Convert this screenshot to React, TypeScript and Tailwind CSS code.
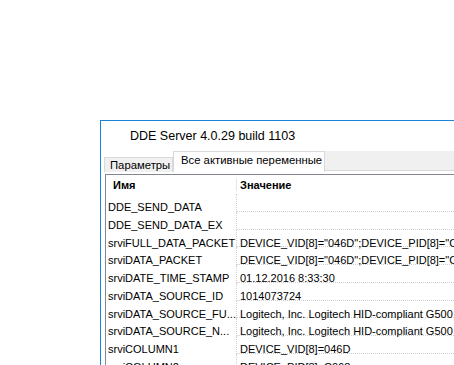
const rows = [
  { name: "DDE_SEND_DATA", value: "" },
  { name: "DDE_SEND_DATA_EX", value: "" },
  { name: "srviFULL_DATA_PACKET", value: 'DEVICE_VID[8]="046D";DEVICE_PID[8]="C068";DEVICE_NAME' },
  { name: "srviDATA_PACKET", value: 'DEVICE_VID[8]="046D";DEVICE_PID[8]="C068";DEVICE_NAME' },
  { name: "srviDATE_TIME_STAMP", value: "01.12.2016 8:33:30" },
  { name: "srviDATA_SOURCE_ID", value: "1014073724" },
  { name: "srviDATA_SOURCE_FU...", value: "Logitech, Inc. Logitech HID-compliant G500 Gaming Mouse" },
  { name: "srviDATA_SOURCE_N...", value: "Logitech, Inc. Logitech HID-compliant G500 Gaming Mouse" },
  { name: "srviCOLUMN1", value: "DEVICE_VID[8]=046D" },
  { name: "srviCOLUMN2", value: "DEVICE_PID[8]=C068" },
];

export default function App() {
  return (
    <div className="w-[454px] h-[365px] overflow-hidden bg-white font-['Liberation_Sans',Arial,sans-serif] text-black whitespace-nowrap">
      <div className="ml-[100px] mt-[120px] w-[354px] border-l border-t border-[#1883d7]">
        {/* Title */}
        <div className="h-[30px] pl-[29px] text-[12.5px] leading-[30px]">DDE Server 4.0.29 build 1103</div>

        {/* Tabs */}
        <div className="flex h-[21px] text-[11.3px]">
          <div className="w-[3px] shrink-0" />
          <div className="shrink-0 mt-[6px] h-[15px] w-[69px] bg-[#f0f0f0] border border-b-0 border-[#d9d9d9] pl-[5px] leading-[14px]">
            Параметры
          </div>
          <div className="shrink-0 h-[21px] w-[152px] bg-white border border-b-0 border-[#d9d9d9] pl-[7px] leading-[17px]">
            Все активные переменные
          </div>
          <div className="flex-1 h-[20px] bg-[#f0f0f0] border-b border-[#d9d9d9]" />
        </div>

        {/* Panel */}
        <div className="pl-[4px] pt-[2px]">
          <div className="border-l border-t border-[#828790] text-[11px]">
            {/* Header */}
            <div className="flex h-[19px] font-bold">
              <div className="shrink-0 w-[130px] pl-[7px] pt-[1px] leading-[19px]">Имя</div>
              <div className="shrink-0 w-px h-[13px] mt-[3px] bg-[#e5e5e5]" />
              <div className="pl-[3px] pt-[1px] leading-[19px]">Значение</div>
            </div>

            {/* Rows */}
            {rows.map((r, i) => (
              <div key={i} className="flex h-[17.75px]">
                <div className="shrink-0 w-[130px] pl-[2px] pt-[8px] leading-none">{r.name}</div>
                <div className="flex-1 min-w-0 border-l border-b border-dotted border-[#d0d0d0] pl-[3px] pt-[8px] leading-none">
                  {r.value}
                </div>
              </div>
            ))}
          </div>
        </div>
      </div>
    </div>
  );
}
